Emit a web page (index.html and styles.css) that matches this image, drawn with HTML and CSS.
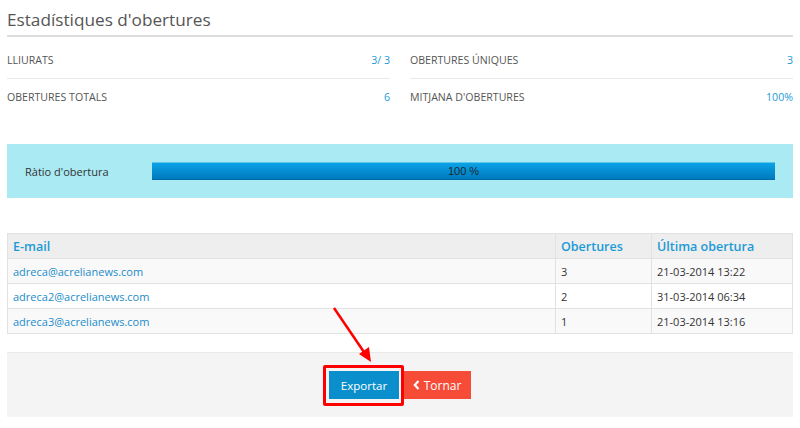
FILE: index.html
```html
<!DOCTYPE html>
<html lang="ca">
<head>
    <meta charset="UTF-8">
    <meta name="viewport" content="width=device-width, initial-scale=1.0">
    <title>Estadístiques d'obertures</title>
    <link rel="stylesheet" href="styles.css">
</head>
<body>
    <div class="page">
        <h1 class="title">Estadístiques d'obertures</h1>

        <div class="stats">
            <div class="stats-col">
                <div class="stat-row"><span>Lliurats</span><span class="value">3/ 3</span></div>
                <div class="stat-row"><span>Obertures totals</span><span class="value">6</span></div>
            </div>
            <div class="stats-col">
                <div class="stat-row"><span>Obertures úniques</span><span class="value">3</span></div>
                <div class="stat-row"><span>Mitjana d'obertures</span><span class="value">100%</span></div>
            </div>
        </div>

        <div class="ratio-panel">
            <div class="ratio-label">Ràtio d'obertura</div>
            <div class="progress">
                <div class="progress-bar" style="width: 100%">100 %</div>
            </div>
        </div>

        <table class="opens-table">
            <thead>
                <tr>
                    <th class="col-email">E-mail</th>
                    <th class="col-opens">Obertures</th>
                    <th class="col-last">Última obertura</th>
                </tr>
            </thead>
            <tbody>
                <tr>
                    <td><a href="#">adreca@acrelianews.com</a></td>
                    <td>3</td>
                    <td>21-03-2014 13:22</td>
                </tr>
                <tr>
                    <td><a href="#">adreca2@acrelianews.com</a></td>
                    <td>2</td>
                    <td>31-03-2014 06:34</td>
                </tr>
                <tr>
                    <td><a href="#">adreca3@acrelianews.com</a></td>
                    <td>1</td>
                    <td>21-03-2014 13:16</td>
                </tr>
            </tbody>
        </table>

        <div class="actions">
            <span class="highlight-wrap">
                <a class="btn btn-blue" href="#">Exportar</a>
                <span class="highlight"></span>
            </span>
            <a class="btn btn-red" href="#">
                <svg class="chevron" width="7" height="10" viewBox="0 0 7 10"><path d="M5.5 1 L1.8 5 L5.5 9" fill="none" stroke="#fff" stroke-width="2.2"/></svg>
                Tornar
            </a>
        </div>

        <!-- fletxa d'anotació -->
        <svg class="arrow" width="800" height="428" viewBox="0 0 800 428">
            <line x1="334" y1="308" x2="366" y2="355" stroke="#f00" stroke-width="2.5"/>
            <polygon points="371,362 359,354 369,347" fill="#f00"/>
        </svg>
    </div>
</body>
</html>
```

FILE: styles.css
```css
* {
    margin: 0;
    padding: 0;
    box-sizing: border-box;
}

body {
    font-family: "Open Sans", Arial, sans-serif;
    background-color: #fff;
    color: #555;
}

.page {
    position: relative;
    padding: 0 7px;
    width: 800px;
    height: 428px;
}

.title {
    font-size: 17.2px;
    font-weight: normal;
    line-height: 28px;
    padding-top: 6px;
    padding-bottom: 1px;
    color: #555;
    border-bottom: 2px solid #ddd;
}

.stats {
    display: flex;
    gap: 20px;
    margin-top: 5px;
}

.stats-col {
    flex: 1;
}

.stat-row {
    display: flex;
    justify-content: space-between;
    align-items: center;
    height: 36px;
    font-size: 10.6px;
    text-transform: uppercase;
    color: #555;
}

.stat-row + .stat-row {
    border-top: 1px solid #e8e8e8;
}

.stat-row .value {
    color: #1b9ad6;
    text-transform: none;
}

.ratio-panel {
    display: flex;
    align-items: center;
    margin-top: 30px;
    height: 54px;
    padding: 0 18px;
    background-color: #aaeaf2;
}

.ratio-label {
    width: 127px;
    font-size: 11px;
    color: #333;
}

.progress {
    flex: 1;
    height: 18px;
}

.progress-bar {
    height: 18px;
    background: linear-gradient(#0ba2e6, #0079bd);
    border-top: 1px solid #5cc6ef;
    border-bottom: 1px solid #006aa8;
    font-family: Arial, "Liberation Sans", sans-serif;
    font-size: 11px;
    line-height: 16px;
    text-align: center;
    color: #1c2a33;
}

.opens-table {
    margin-top: 35px;
    width: 100%;
    border-collapse: collapse;
    border: 1px solid #ddd;
    font-size: 11px;
}

.opens-table th,
.opens-table td {
    border: 1px solid #e2e2e2;
    text-align: left;
    padding: 0 5px;
}

.opens-table th {
    height: 25px;
    background-color: #eee;
    color: #1b9ad6;
    font-size: 12.5px;
    font-weight: 600;
}

.opens-table td {
    height: 25px;
    color: #333;
}

.opens-table tbody tr:nth-child(odd) td {
    background-color: #f9f9f9;
}

.opens-table td a {
    color: #1b8cc9;
    text-decoration: none;
}

.col-opens {
    width: 96px;
}

.col-last {
    width: 141px;
}

.actions {
    margin-top: 18px;
    height: 65px;
    background-color: #f4f4f4;
    border-top: 1px solid #e9e9e9;
    display: flex;
    justify-content: center;
    align-items: center;
    gap: 4px;
}

.highlight-wrap {
    position: relative;
    display: inline-block;
}

.highlight {
    position: absolute;
    top: -6px;
    left: -6px;
    right: -5px;
    bottom: -7px;
    border: 3px solid #f00;
    border-radius: 2px;
}

.btn {
    display: inline-flex;
    align-items: center;
    justify-content: center;
    gap: 4px;
    height: 28px;
    font-size: 11.5px;
    color: #fff;
    text-decoration: none;
}

.btn-blue {
    width: 70px;
    background-color: #0a8fcc;
}

.btn-red {
    width: 68px;
    background-color: #f54b37;
    font-size: 12px;
}

.arrow {
    position: absolute;
    top: 0;
    left: 0;
    pointer-events: none;
}
```
